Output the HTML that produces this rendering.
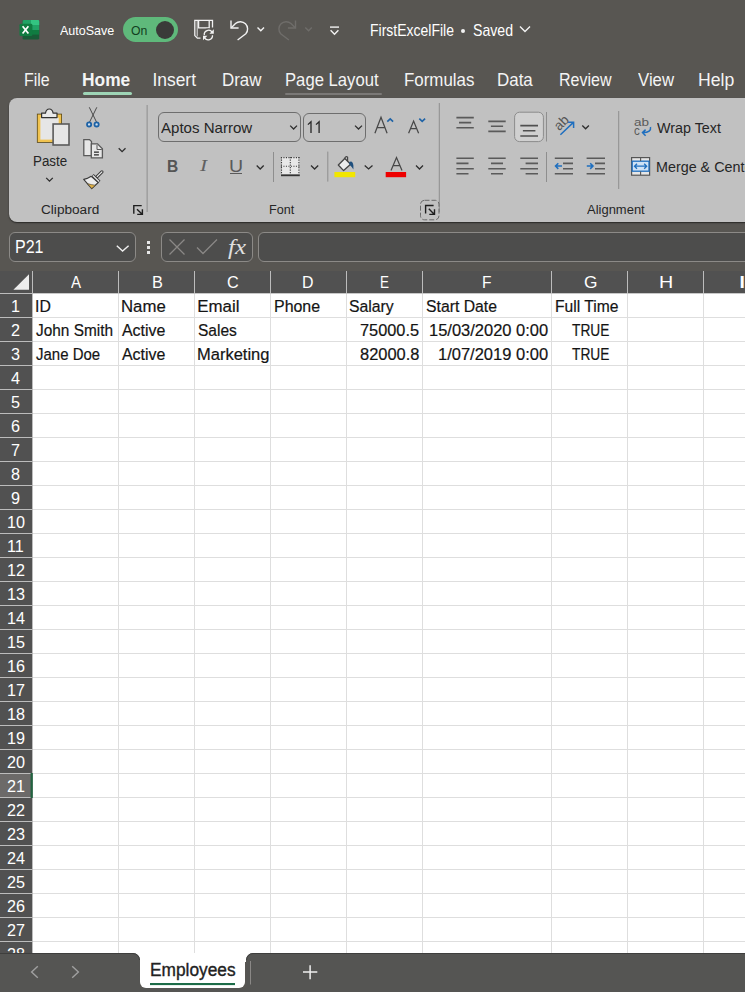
<!DOCTYPE html>
<html><head><meta charset="utf-8"><style>
html,body{margin:0;padding:0;}
body{width:745px;height:992px;overflow:hidden;position:relative;background:#585652;font-family:"Liberation Sans", sans-serif;}
.t{position:absolute;line-height:1;white-space:nowrap;transform-origin:0 0;}
.r{position:absolute;box-sizing:border-box;}
.s{position:absolute;overflow:visible;}
</style></head><body>
<svg class="s" style="left:0px;top:0px" width="60" height="60" viewBox="0 0 60 60">
<rect x="22.6" y="20" width="16.6" height="19.6" rx="1.4" fill="#185c37"/>
<path d="M22.6 21.4 a1.4 1.4 0 0 1 1.4 -1.4 h13.8 a1.4 1.4 0 0 1 1.4 1.4 v3.6 h-16.6z" fill="#21a366"/>
<path d="M31 20 h6.8 a1.4 1.4 0 0 1 1.4 1.4 v3.6 h-8.2z" fill="#33c481"/>
<rect x="22.6" y="25" width="16.6" height="5" fill="#21a366"/>
<rect x="22.6" y="30" width="16.6" height="4.6" fill="#107c41"/>
<rect x="19.5" y="23.8" width="12.9" height="12.3" rx="1.4" fill="#107c41"/>
<path d="M22.6 26.2 L28.4 33.6 M28.4 26.2 L22.6 33.6" stroke="#fff" stroke-width="1.7"/>
</svg>
<div class="t" style="left:59.98px;top:24.00px;font-size:13.44px;color:#fff;font-weight:normal;font-style:normal;font-family:'Liberation Sans', sans-serif;transform:scaleX(0.9319);">AutoSave</div>
<div class="r" style="left:123px;top:17px;width:55px;height:25px;background:#5fb97b;border-radius:13px;"></div>
<div class="r" style="left:156px;top:21.2px;width:18px;height:18px;border-radius:50%;background:#3a3a39"></div>
<div class="t" style="left:131.42px;top:24.00px;font-size:13.08px;color:#123f21;font-weight:normal;font-style:normal;font-family:'Liberation Sans', sans-serif;transform:scaleX(0.9386);">On</div>
<svg class="s" style="left:180px;top:10px" width="170" height="40" viewBox="180 10 170 40">
<g fill="none" stroke="#f2f2f2" stroke-width="1.3">
<path d="M200.5 38.2 H197.4 L194.8 35.6 V20.4 H212.5 V27.5" fill="none" stroke="#f2f2f2" stroke-width="1.3"/>
<path d="M197.2 21 V36.5" fill="none" stroke="#f2f2f2" stroke-width="0.9"/>
<path d="M198.6 20.4 V27.8 H209.2 V20.4" fill="none" stroke="#f2f2f2" stroke-width="1.3"/>
<circle cx="208.4" cy="34.6" r="6.4" fill="#585652" stroke="none"/>
<g fill="none" stroke="#f2f2f2" stroke-width="1.3">
<path d="M204.3 35.2 A4.3 4.3 0 0 1 212.2 32.3"/>
<path d="M212.5 35.2 A4.3 4.3 0 0 1 204.6 37.8"/>
</g>
<path d="M213.8 29.3 V33.8 H209.4 Z" fill="#f2f2f2" stroke="none"/>
<path d="M203 40.2 V35.7 H207.4 Z" fill="#f2f2f2" stroke="none"/>
</g>
<g fill="none" stroke="#f2f2f2" stroke-width="1.4">
<path d="M231 20.6 V28 H238.6"/>
<path d="M231.3 27.7 L235.5 23.5 A7.3 7.3 0 0 1 245.8 33.8 L237.6 40"/>
<path d="M257.5 27.5 L260.8 30.8 L264 27.5"/>
</g>
<g fill="none" stroke="#6f6d6a" stroke-width="1.4">
<path d="M295.5 20.6 V28 H287.9"/>
<path d="M295.2 27.7 L291 23.5 A7.3 7.3 0 0 0 280.7 33.8 L288.9 40"/>
<path d="M305.3 27.5 L308.6 30.8 L311.8 27.5"/>
</g>
<g fill="none" stroke="#f2f2f2" stroke-width="1.4">
<path d="M330 27.1 H339"/>
<path d="M330.6 30.3 L334.5 34.2 L338.4 30.3"/>
</g>
</svg>
<div class="t" style="left:369.65px;top:23.00px;font-size:15.99px;color:#fff;font-weight:normal;font-style:normal;font-family:'Liberation Sans', sans-serif;transform:scaleX(0.8752);">FirstExcelFile</div>
<div class="r" style="left:461.3px;top:28.6px;width:4px;height:4px;border-radius:50%;background:#f2f2f2"></div>
<div class="t" style="left:472.86px;top:23.00px;font-size:15.99px;color:#fff;font-weight:normal;font-style:normal;font-family:'Liberation Sans', sans-serif;transform:scaleX(0.8835);">Saved</div>
<svg class="s" style="left:515px;top:20px" width="20" height="20" viewBox="515 20 20 20"><path d="M520 26.5 L525 31.5 L530 26.5" fill="none" stroke="#f2f2f2" stroke-width="1.4"/></svg>
<div class="t" style="left:24.39px;top:72.00px;font-size:17.44px;color:#f4f4f4;font-weight:normal;font-style:normal;font-family:'Liberation Sans', sans-serif;transform:scaleX(0.9151);">File</div>
<div class="t" style="left:82.34px;top:72.00px;font-size:17.44px;color:#f4f4f4;font-weight:bold;font-style:normal;font-family:'Liberation Sans', sans-serif;transform:scaleX(0.9958);">Home</div>
<div class="r" style="left:83px;top:92px;width:49px;height:3px;background:#9ed5b6;border-radius:2px;"></div>
<div class="t" style="left:152.39px;top:72.00px;font-size:17.44px;color:#f4f4f4;font-weight:normal;font-style:normal;font-family:'Liberation Sans', sans-serif;">Insert</div>
<div class="t" style="left:221.51px;top:72.00px;font-size:17.44px;color:#f4f4f4;font-weight:normal;font-style:normal;font-family:'Liberation Sans', sans-serif;transform:scaleX(0.9692);">Draw</div>
<div class="t" style="left:285.13px;top:72.00px;font-size:17.44px;color:#f4f4f4;font-weight:normal;font-style:normal;font-family:'Liberation Sans', sans-serif;transform:scaleX(0.9555);">Page Layout</div>
<div class="r" style="left:285px;top:93px;width:97px;height:2px;background:#7b7977;border-radius:1px;"></div>
<div class="t" style="left:404.01px;top:72.00px;font-size:17.44px;color:#f4f4f4;font-weight:normal;font-style:normal;font-family:'Liberation Sans', sans-serif;transform:scaleX(0.9685);">Formulas</div>
<div class="t" style="left:497.11px;top:72.00px;font-size:17.44px;color:#f4f4f4;font-weight:normal;font-style:normal;font-family:'Liberation Sans', sans-serif;transform:scaleX(0.9714);">Data</div>
<div class="t" style="left:558.98px;top:72.00px;font-size:17.44px;color:#f4f4f4;font-weight:normal;font-style:normal;font-family:'Liberation Sans', sans-serif;transform:scaleX(0.9193);">Review</div>
<div class="t" style="left:637.53px;top:72.00px;font-size:17.44px;color:#f4f4f4;font-weight:normal;font-style:normal;font-family:'Liberation Sans', sans-serif;transform:scaleX(0.9611);">View</div>
<div class="t" style="left:697.95px;top:72.00px;font-size:17.44px;color:#f4f4f4;font-weight:normal;font-style:normal;font-family:'Liberation Sans', sans-serif;transform:scaleX(1.0116);">Help</div>
<div class="r" style="left:9px;top:97.5px;width:760px;height:124px;background:#c1c1c1;border-radius:8px;box-shadow:0 1px 1.5px rgba(0,0,0,0.55)"></div>
<svg class="s" style="left:20px;top:100px" width="140" height="120" viewBox="20 100 140 120">
<rect x="36.9" y="113.7" width="25.1" height="29.1" fill="#594817"/>
<rect x="37.7" y="114.5" width="23.5" height="27.5" fill="#f1c34f"/>
<rect x="40.4" y="117.6" width="18.3" height="22" fill="#e6e6e6"/>
<path d="M41.6 117.6 V113.1 H45.5 Q46.2 109 49.3 109 Q52.4 109 53.1 113.1 H57 V117.6 Z" fill="#e9e9e9" stroke="#333333" stroke-width="1.2" stroke-linejoin="round"/>
<rect x="53.1" y="124" width="15.9" height="21" fill="#e6e6e6" stroke="#5a5a5a" stroke-width="1.6"/>
<g fill="none" stroke="#4a4a4a" stroke-width="1">
<path d="M89.3 107.3 L96.5 122 M96.8 107.3 L89.6 122"/>
</g>
<g fill="#cfe0f0" stroke="#1d62a6" stroke-width="1.8">
<circle cx="89.1" cy="124.4" r="2.1"/>
<circle cx="96.6" cy="124.4" r="2.1"/>
</g>
<g fill="#e6e6e6" stroke="#5a5a5a" stroke-width="1.3">
<path d="M83.8 139.6 H89.5 L91.5 141.6 V155.6 H83.8 Z"/>
<path d="M91.3 143.9 H97.5 L102.4 148.8 V157.8 H91.3 Z"/>
</g>
<path d="M94 152.2 H98.9 M94 154.8 H98.9" stroke="#262626" stroke-width="1.2"/>
<path d="M97 145 V149.5 H101.8" fill="none" stroke="#5a5a5a" stroke-width="1"/>
<path d="M46.2 177.9 L49.5 181.2 L52.8 177.9" fill="none" stroke="#2e2e2e" stroke-width="1.3"/>
<path d="M118.7 148.2 L122.1 151.6 L125.5 148.2" fill="none" stroke="#2e2e2e" stroke-width="1.3"/>
<path d="M91.2 176.3 Q87.5 178.8 83.7 179.4 L91.7 188.6 L98.3 182.5 Z" fill="#ececec" stroke="#3a3a3a" stroke-width="1.1" stroke-linejoin="round"/>
<path d="M87.3 183.6 Q91.5 184.8 95.6 185.3 L91.7 188.4 Z" fill="#e3b345" stroke="#3a3a3a" stroke-width="0.6"/>
<path d="M101.9 171.9 L97.1 176.7" stroke="#3d3d3d" stroke-width="3.3" stroke-linecap="round"/>
<path d="M101.9 171.9 L97.1 176.7" stroke="#eeeeee" stroke-width="1.2" stroke-linecap="round"/>
<path d="M92.6 175.2 L99.4 181.8" stroke="#3d3d3d" stroke-width="3.2"/>
<path d="M92.9 175.5 L99.1 181.5" stroke="#eeeeee" stroke-width="1.1"/>
<g fill="none" stroke="#1e1e1e" stroke-width="1.4">
<path d="M133.8 213.8 V205.6 H141.7"/>
<path d="M137 209.2 L142.2 214.2 M142.4 209.3 V214.4 H137.2"/>
</g>
<rect x="146.6" y="105" width="1" height="107" fill="#8e8e8e"/>
</svg>
<div class="t" style="left:32.70px;top:154.00px;font-size:14.53px;color:#262626;font-weight:normal;font-style:normal;font-family:'Liberation Sans', sans-serif;transform:scaleX(0.9199);">Paste</div>
<div class="t" style="left:41.11px;top:203.00px;font-size:13.08px;color:#262626;font-weight:normal;font-style:normal;font-family:'Liberation Sans', sans-serif;transform:scaleX(1.0407);">Clipboard</div>
<div class="r" style="left:158px;top:112px;width:142.5px;height:30px;border:1px solid #6e6e6e;border-radius:6px;"></div>
<div class="t" style="left:161.47px;top:120.00px;font-size:15.41px;color:#262626;font-weight:normal;font-style:normal;font-family:'Liberation Sans', sans-serif;transform:scaleX(0.9771);">Aptos Narrow</div>
<div class="r" style="left:303.3px;top:112.5px;width:62.3px;height:29px;border:1px solid #6e6e6e;border-radius:6px;"></div>
<svg class="s" style="left:150px;top:100px" width="300" height="120" viewBox="150 100 300 120">
<g fill="none" stroke="#2e2e2e" stroke-width="1.3">
<path d="M290.2 125.6 L293.6 129 L297 125.6"/>
<path d="M355 125.6 L358.5 129 L362 125.6"/>
<path d="M256.7 165.5 L260.2 169 L263.7 165.5"/>
<path d="M311 165.5 L314.6 169 L318.2 165.5"/>
<path d="M364.7 165.5 L368.6 169 L372.5 165.5"/>
<path d="M416 165.5 L419.5 169 L423 165.5"/>
</g>
<path d="M307.9 124.6 L311 121.7 V133 M316 124.6 L319.1 121.7 V133" fill="none" stroke="#262626" stroke-width="1.3"/>
<g fill="none" stroke="#1f63a6" stroke-width="1.6">
<path d="M387.3 121.6 L390.2 118.8 L393.1 121.6"/>
<path d="M419.3 118.6 L422.2 121.4 L425.1 118.6"/>
</g>
<g fill="none" stroke="#474747" stroke-width="1.25">
<path d="M374.9 133.2 L381 117.3 L387.1 133.2 M377.1 127.7 H384.9"/>
<path d="M408.6 133.2 L413.6 121.1 L418.6 133.2 M410.4 128.6 H416.8"/>
<path d="M391 170.6 L396.5 157.6 L402 170.6 M393 165.6 H400"/>
</g>
<rect x="273" y="152" width="1" height="30" fill="#8e8e8e"/>
<rect x="327.3" y="151.6" width="1" height="30" fill="#8e8e8e"/>
<rect x="281.4" y="157.4" width="18" height="17" fill="#e8e8e8"/>
<g fill="none" stroke="#3c3c3c" stroke-width="1.1" stroke-dasharray="1.1 1.4">
<path d="M280.9 157.6 H300.5 M280.9 166.3 H300.5"/>
<path d="M281.5 157.1 V174.5 M290.3 157.1 V174.5 M298.9 157.1 V174.5"/>
</g>
<rect x="281" y="174.4" width="18.8" height="1.8" fill="#333333"/>
<rect x="334.4" y="172" width="20.8" height="5.2" fill="#f2e600"/>
<rect x="385.7" y="172" width="20.4" height="5.2" fill="#ee0000"/>
<path d="M338.3 165 L344.8 158.5 L350.6 164.3 L343.6 170.6 Z" fill="#ececec" stroke="#454545" stroke-width="1.3" stroke-linejoin="round"/>
<path d="M344.3 159 Q345.8 155.3 347.6 157.2 L347.6 161.2" fill="none" stroke="#454545" stroke-width="1.2"/>
<path d="M349.2 162 Q352.6 159.8 353.4 165.5 L353.4 169.4 Q351.5 166.5 349.4 164.5 Z" fill="#1f4f7d"/>
<rect x="438.8" y="103" width="1" height="109" fill="#8e8e8e"/>
<rect x="420.5" y="200.3" width="18.5" height="19.5" rx="4" fill="none" stroke="#6a6a6a" stroke-width="1" stroke-dasharray="5 2"/>
<g fill="none" stroke="#1e1e1e" stroke-width="1.4">
<path d="M425.6 213.6 V205.5 H433.6"/>
<path d="M428.8 208.8 L434.2 214.2 M434.5 209.3 V214.4 H429.3"/>
</g>
</svg>
<div class="t" style="left:167.46px;top:158.00px;font-size:16.13px;color:#555555;font-weight:bold;font-style:normal;font-family:'Liberation Sans', sans-serif;transform:scaleX(0.9655);">B</div>
<div class="t" style="left:200.08px;top:158.00px;font-size:16.13px;color:#606060;font-weight:normal;font-style:italic;font-family:'Liberation Serif', serif;transform:scaleX(1.3188);">I</div>
<div class="t" style="left:228.99px;top:158.00px;font-size:16.13px;color:#5a5a5a;font-weight:normal;font-style:normal;font-family:'Liberation Sans', sans-serif;transform:scaleX(1.2115);">U</div>
<div class="r" style="left:230.3px;top:173px;width:11.5px;height:1.4px;background:#5a5a5a;"></div>
<div class="t" style="left:269.37px;top:203.00px;font-size:13.08px;color:#262626;font-weight:normal;font-style:normal;font-family:'Liberation Sans', sans-serif;transform:scaleX(0.9637);">Font</div>
<svg class="s" style="left:440px;top:100px" width="305" height="120" viewBox="440 100 305 120">
<g stroke="#5a5a5a" stroke-width="1.6">
<path d="M456.4 117.6 H473.8 M459 122.6 H471.2 M456.4 127.8 H473.8"/>
<path d="M488.3 121.4 H505.7 M490.9 126.2 H503.1 M488.3 131.4 H505.7"/>
<path d="M520.3 125.6 H538 M522.9 130.8 H535.4 M520.3 136 H538"/>
<path d="M456.4 158.2 H473.8 M456.4 163.4 H468.5 M456.4 168.8 H473.8 M456.4 173.8 H468.5"/>
<path d="M488.3 158.2 H505.7 M491 163.4 H503 M488.3 168.8 H505.7 M491 173.8 H503"/>
<path d="M520.3 158.2 H538 M525.6 163.4 H538 M520.3 168.8 H538 M525.6 173.8 H538"/>
<path d="M554.8 158.2 H573 M563 163.4 H573 M563 168.8 H573 M554.8 173.8 H573"/>
<path d="M586.6 158.2 H605 M595 163.4 H605 M595 168.8 H605 M586.6 173.8 H605"/>
</g>
<g fill="none" stroke="#1f6fbf" stroke-width="1.5">
<path d="M555.5 166.1 H562 M558.3 163.3 L555.5 166.1 L558.3 168.9"/>
<path d="M586.8 166.1 H593 M590.2 163.3 L593 166.1 L590.2 168.9"/>
<path d="M560.4 134.7 L573.4 122.4 M567.8 122.3 H573.6 V128"/>
</g>
<rect x="514.6" y="112.2" width="28.8" height="29.4" rx="5" fill="#d0d0d0" stroke="#8c8c8c" stroke-width="1"/>
<path d="M520.3 125.6 H538 M522.9 130.8 H535.4 M520.3 136 H538" stroke="#505050" stroke-width="1.6"/>
<rect x="546" y="112" width="1" height="29.5" fill="#8e8e8e"/>
<rect x="546" y="152" width="1" height="30" fill="#8e8e8e"/>
<path d="M582.3 125.5 L585.6 128.8 L588.9 125.5" fill="none" stroke="#2e2e2e" stroke-width="1.3"/>
<rect x="618.2" y="111" width="1" height="78" fill="#8e8e8e"/>
<path d="M650.5 127 Q651.5 132.3 643 132.6 M645.6 129.6 L642.5 132.6 L645.6 135.8" fill="none" stroke="#1f6fbf" stroke-width="1.5"/>
<rect x="631.6" y="157.6" width="18" height="17.6" fill="#e6e6e6" stroke="#555" stroke-width="1.2"/>
<rect x="632.2" y="161.2" width="16.8" height="10" fill="#cfe2f5" stroke="#1f6fbf" stroke-width="1.3"/>
<path d="M640.6 157.6 V161 M640.6 171.4 V175" stroke="#555" stroke-width="1.1"/>
<path d="M634.5 166.2 H646.7 M637 163.7 L634.5 166.2 L637 168.7 M644.2 163.7 L646.7 166.2 L644.2 168.7" fill="none" stroke="#1f6fbf" stroke-width="1.3"/>
</svg>
<div class="t" style="left:551.5px;top:116px;width:20px;height:15px;text-align:center;font-size:13.5px;color:#555;transform:rotate(-45deg);transform-origin:50% 50%;">ab</div>
<div class="t" style="left:633.63px;top:118.00px;font-size:10.17px;color:#5a5a5a;font-weight:normal;font-style:normal;font-family:'Liberation Sans', sans-serif;transform:scaleX(1.3292);">ab</div>
<div class="t" style="left:633.71px;top:125.00px;font-size:12.45px;color:#5a5a5a;font-weight:normal;font-style:normal;font-family:'Liberation Sans', sans-serif;transform:scaleX(0.9313);">c</div>
<div class="t" style="left:656.64px;top:121.00px;font-size:14.53px;color:#262626;font-weight:normal;font-style:normal;font-family:'Liberation Sans', sans-serif;transform:scaleX(0.9871);">Wrap Text</div>
<div class="t" style="left:655.52px;top:160.00px;font-size:14.53px;color:#262626;font-weight:normal;font-style:normal;font-family:'Liberation Sans', sans-serif;transform:scaleX(0.9871);">Merge &amp; Center</div>
<div class="t" style="left:587.37px;top:203.00px;font-size:13.08px;color:#262626;font-weight:normal;font-style:normal;font-family:'Liberation Sans', sans-serif;transform:scaleX(0.9923);">Alignment</div>
<div class="r" style="left:9px;top:232px;width:127px;height:30px;border:1px solid #8c8a87;border-radius:6px;background:#4d4d4c"></div>
<div class="t" style="left:15.29px;top:239.00px;font-size:17.73px;color:#fff;font-weight:normal;font-style:normal;font-family:'Liberation Sans', sans-serif;transform:scaleX(0.9032);">P21</div>
<svg class="s" style="left:110px;top:240px" width="25" height="15" viewBox="110 240 25 15"><path d="M116.8 245.8 L122.6 251 L128.6 245.8" fill="none" stroke="#f0f0f0" stroke-width="1.4"/></svg>
<div class="r" style="left:147.2px;top:240.8px;width:3px;height:3px;background:#e6e6e6"></div>
<div class="r" style="left:147.2px;top:245.8px;width:3px;height:3px;background:#e6e6e6"></div>
<div class="r" style="left:147.2px;top:250.8px;width:3px;height:3px;background:#e6e6e6"></div>
<div class="r" style="left:161px;top:232px;width:92px;height:30px;border:1px solid #8c8a87;border-radius:6px;background:#4d4d4c"></div>
<svg class="s" style="left:160px;top:232px" width="95" height="30" viewBox="160 232 95 30"><g fill="none" stroke="#8a8886" stroke-width="1.3">
<path d="M169.5 239.5 L184.5 254.5 M184.5 239.5 L169.5 254.5"/>
<path d="M197 247.5 L203 253.5 L217 239.5"/>
</g></svg>
<div class="t" style="left:228.22px;top:237.00px;font-size:20.35px;color:#e0e0e0;font-weight:normal;font-style:italic;font-family:'Liberation Serif', serif;transform:scaleX(1.2231);">fx</div>
<div class="r" style="left:258px;top:232px;width:500px;height:30px;border:1px solid #8c8a87;border-radius:6px;background:#4d4d4c"></div>
<div class="r" style="left:0px;top:271px;width:745px;height:22px;background:#515151;"></div>
<div class="r" style="left:0px;top:293px;width:32px;height:660px;background:#515151;"></div>
<div class="r" style="left:33px;top:294px;width:712px;height:659px;background:#ffffff;"></div>
<svg class="s" style="left:0px;top:265px" width="745" height="700" viewBox="0 265 745 700"><path d="M13.4 289.7 H29 V274.2 Z" fill="#ededed"/><rect x="32" y="271" width="1" height="682" fill="#bcbcbc"/><rect x="118" y="271" width="1" height="22" fill="#bcbcbc"/><rect x="118" y="294" width="1" height="659" fill="#dedede"/><rect x="194" y="271" width="1" height="22" fill="#bcbcbc"/><rect x="194" y="294" width="1" height="659" fill="#dedede"/><rect x="270" y="271" width="1" height="22" fill="#bcbcbc"/><rect x="270" y="294" width="1" height="659" fill="#dedede"/><rect x="346" y="271" width="1" height="22" fill="#bcbcbc"/><rect x="346" y="294" width="1" height="659" fill="#dedede"/><rect x="422" y="271" width="1" height="22" fill="#bcbcbc"/><rect x="422" y="294" width="1" height="659" fill="#dedede"/><rect x="551" y="271" width="1" height="22" fill="#bcbcbc"/><rect x="551" y="294" width="1" height="659" fill="#dedede"/><rect x="627" y="271" width="1" height="22" fill="#bcbcbc"/><rect x="627" y="294" width="1" height="659" fill="#dedede"/><rect x="703" y="271" width="1" height="22" fill="#bcbcbc"/><rect x="703" y="294" width="1" height="659" fill="#dedede"/><rect x="0" y="293" width="33" height="1" fill="#bcbcbc"/><rect x="33" y="293" width="712" height="1" fill="#c8c8c8"/><rect x="0" y="317" width="32" height="1" fill="#bcbcbc"/><rect x="33" y="317" width="712" height="1" fill="#dedede"/><rect x="0" y="341" width="32" height="1" fill="#bcbcbc"/><rect x="33" y="341" width="712" height="1" fill="#dedede"/><rect x="0" y="365" width="32" height="1" fill="#bcbcbc"/><rect x="33" y="365" width="712" height="1" fill="#dedede"/><rect x="0" y="389" width="32" height="1" fill="#bcbcbc"/><rect x="33" y="389" width="712" height="1" fill="#dedede"/><rect x="0" y="413" width="32" height="1" fill="#bcbcbc"/><rect x="33" y="413" width="712" height="1" fill="#dedede"/><rect x="0" y="437" width="32" height="1" fill="#bcbcbc"/><rect x="33" y="437" width="712" height="1" fill="#dedede"/><rect x="0" y="461" width="32" height="1" fill="#bcbcbc"/><rect x="33" y="461" width="712" height="1" fill="#dedede"/><rect x="0" y="485" width="32" height="1" fill="#bcbcbc"/><rect x="33" y="485" width="712" height="1" fill="#dedede"/><rect x="0" y="509" width="32" height="1" fill="#bcbcbc"/><rect x="33" y="509" width="712" height="1" fill="#dedede"/><rect x="0" y="533" width="32" height="1" fill="#bcbcbc"/><rect x="33" y="533" width="712" height="1" fill="#dedede"/><rect x="0" y="557" width="32" height="1" fill="#bcbcbc"/><rect x="33" y="557" width="712" height="1" fill="#dedede"/><rect x="0" y="581" width="32" height="1" fill="#bcbcbc"/><rect x="33" y="581" width="712" height="1" fill="#dedede"/><rect x="0" y="605" width="32" height="1" fill="#bcbcbc"/><rect x="33" y="605" width="712" height="1" fill="#dedede"/><rect x="0" y="629" width="32" height="1" fill="#bcbcbc"/><rect x="33" y="629" width="712" height="1" fill="#dedede"/><rect x="0" y="653" width="32" height="1" fill="#bcbcbc"/><rect x="33" y="653" width="712" height="1" fill="#dedede"/><rect x="0" y="677" width="32" height="1" fill="#bcbcbc"/><rect x="33" y="677" width="712" height="1" fill="#dedede"/><rect x="0" y="701" width="32" height="1" fill="#bcbcbc"/><rect x="33" y="701" width="712" height="1" fill="#dedede"/><rect x="0" y="725" width="32" height="1" fill="#bcbcbc"/><rect x="33" y="725" width="712" height="1" fill="#dedede"/><rect x="0" y="749" width="32" height="1" fill="#bcbcbc"/><rect x="33" y="749" width="712" height="1" fill="#dedede"/><rect x="0" y="773" width="32" height="1" fill="#bcbcbc"/><rect x="33" y="773" width="712" height="1" fill="#dedede"/><rect x="0" y="797" width="32" height="1" fill="#bcbcbc"/><rect x="33" y="797" width="712" height="1" fill="#dedede"/><rect x="0" y="821" width="32" height="1" fill="#bcbcbc"/><rect x="33" y="821" width="712" height="1" fill="#dedede"/><rect x="0" y="845" width="32" height="1" fill="#bcbcbc"/><rect x="33" y="845" width="712" height="1" fill="#dedede"/><rect x="0" y="869" width="32" height="1" fill="#bcbcbc"/><rect x="33" y="869" width="712" height="1" fill="#dedede"/><rect x="0" y="893" width="32" height="1" fill="#bcbcbc"/><rect x="33" y="893" width="712" height="1" fill="#dedede"/><rect x="0" y="917" width="32" height="1" fill="#bcbcbc"/><rect x="33" y="917" width="712" height="1" fill="#dedede"/><rect x="0" y="941" width="32" height="1" fill="#bcbcbc"/><rect x="33" y="941" width="712" height="1" fill="#dedede"/><rect x="0" y="774" width="32" height="23" fill="#6c6a69"/><rect x="30.6" y="773" width="2.2" height="25" fill="#226340"/></svg>
<div class="t" style="left:70.97px;top:274.00px;font-size:17.01px;color:#ffffff;font-weight:normal;font-style:normal;font-family:'Liberation Sans', sans-serif;transform:scaleX(0.8868);">A</div>
<div class="t" style="left:151.76px;top:274.00px;font-size:17.01px;color:#ffffff;font-weight:normal;font-style:normal;font-family:'Liberation Sans', sans-serif;transform:scaleX(0.9612);">B</div>
<div class="t" style="left:226.57px;top:274.00px;font-size:17.01px;color:#ffffff;font-weight:normal;font-style:normal;font-family:'Liberation Sans', sans-serif;transform:scaleX(0.9564);">C</div>
<div class="t" style="left:302.40px;top:274.00px;font-size:17.01px;color:#ffffff;font-weight:normal;font-style:normal;font-family:'Liberation Sans', sans-serif;transform:scaleX(0.9333);">D</div>
<div class="t" style="left:379.90px;top:274.00px;font-size:17.01px;color:#ffffff;font-weight:normal;font-style:normal;font-family:'Liberation Sans', sans-serif;transform:scaleX(0.7920);">E</div>
<div class="t" style="left:482.42px;top:274.00px;font-size:17.01px;color:#ffffff;font-weight:normal;font-style:normal;font-family:'Liberation Sans', sans-serif;transform:scaleX(0.9143);">F</div>
<div class="t" style="left:583.63px;top:274.00px;font-size:17.01px;color:#ffffff;font-weight:normal;font-style:normal;font-family:'Liberation Sans', sans-serif;transform:scaleX(1.0178);">G</div>
<div class="t" style="left:658.88px;top:274.00px;font-size:17.01px;color:#ffffff;font-weight:normal;font-style:normal;font-family:'Liberation Sans', sans-serif;transform:scaleX(1.1580);">H</div>
<div class="t" style="left:737.83px;top:274.00px;font-size:17.01px;color:#ffffff;font-weight:normal;font-style:normal;font-family:'Liberation Sans', sans-serif;transform:scaleX(1.7655);">I</div>
<div class="t" style="left:11.17px;top:299.00px;font-size:16.72px;color:#ffffff;font-weight:normal;font-style:normal;font-family:'Liberation Sans', sans-serif;transform:scaleX(0.9700);">1</div>
<div class="t" style="left:11.39px;top:323.00px;font-size:16.72px;color:#ffffff;font-weight:normal;font-style:normal;font-family:'Liberation Sans', sans-serif;transform:scaleX(0.9700);">2</div>
<div class="t" style="left:11.44px;top:347.00px;font-size:16.72px;color:#ffffff;font-weight:normal;font-style:normal;font-family:'Liberation Sans', sans-serif;transform:scaleX(0.9700);">3</div>
<div class="t" style="left:11.44px;top:371.00px;font-size:16.72px;color:#ffffff;font-weight:normal;font-style:normal;font-family:'Liberation Sans', sans-serif;transform:scaleX(0.9700);">4</div>
<div class="t" style="left:11.41px;top:395.00px;font-size:16.72px;color:#ffffff;font-weight:normal;font-style:normal;font-family:'Liberation Sans', sans-serif;transform:scaleX(0.9700);">5</div>
<div class="t" style="left:11.34px;top:419.00px;font-size:16.72px;color:#ffffff;font-weight:normal;font-style:normal;font-family:'Liberation Sans', sans-serif;transform:scaleX(0.9700);">6</div>
<div class="t" style="left:11.38px;top:443.00px;font-size:16.72px;color:#ffffff;font-weight:normal;font-style:normal;font-family:'Liberation Sans', sans-serif;transform:scaleX(0.9700);">7</div>
<div class="t" style="left:11.39px;top:467.00px;font-size:16.72px;color:#ffffff;font-weight:normal;font-style:normal;font-family:'Liberation Sans', sans-serif;transform:scaleX(0.9700);">8</div>
<div class="t" style="left:11.40px;top:491.00px;font-size:16.72px;color:#ffffff;font-weight:normal;font-style:normal;font-family:'Liberation Sans', sans-serif;transform:scaleX(0.9700);">9</div>
<div class="t" style="left:6.58px;top:515.00px;font-size:16.72px;color:#ffffff;font-weight:normal;font-style:normal;font-family:'Liberation Sans', sans-serif;transform:scaleX(0.9700);">10</div>
<div class="t" style="left:6.66px;top:539.00px;font-size:16.72px;color:#ffffff;font-weight:normal;font-style:normal;font-family:'Liberation Sans', sans-serif;transform:scaleX(0.9700);">11</div>
<div class="t" style="left:6.67px;top:563.00px;font-size:16.72px;color:#ffffff;font-weight:normal;font-style:normal;font-family:'Liberation Sans', sans-serif;transform:scaleX(0.9700);">12</div>
<div class="t" style="left:6.62px;top:587.00px;font-size:16.72px;color:#ffffff;font-weight:normal;font-style:normal;font-family:'Liberation Sans', sans-serif;transform:scaleX(0.9700);">13</div>
<div class="t" style="left:6.50px;top:611.00px;font-size:16.72px;color:#ffffff;font-weight:normal;font-style:normal;font-family:'Liberation Sans', sans-serif;transform:scaleX(0.9700);">14</div>
<div class="t" style="left:6.61px;top:635.00px;font-size:16.72px;color:#ffffff;font-weight:normal;font-style:normal;font-family:'Liberation Sans', sans-serif;transform:scaleX(0.9700);">15</div>
<div class="t" style="left:6.62px;top:659.00px;font-size:16.72px;color:#ffffff;font-weight:normal;font-style:normal;font-family:'Liberation Sans', sans-serif;transform:scaleX(0.9700);">16</div>
<div class="t" style="left:6.67px;top:683.00px;font-size:16.72px;color:#ffffff;font-weight:normal;font-style:normal;font-family:'Liberation Sans', sans-serif;transform:scaleX(0.9700);">17</div>
<div class="t" style="left:6.62px;top:707.00px;font-size:16.72px;color:#ffffff;font-weight:normal;font-style:normal;font-family:'Liberation Sans', sans-serif;transform:scaleX(0.9700);">18</div>
<div class="t" style="left:6.65px;top:731.00px;font-size:16.72px;color:#ffffff;font-weight:normal;font-style:normal;font-family:'Liberation Sans', sans-serif;transform:scaleX(0.9700);">19</div>
<div class="t" style="left:6.79px;top:755.00px;font-size:16.72px;color:#ffffff;font-weight:normal;font-style:normal;font-family:'Liberation Sans', sans-serif;transform:scaleX(0.9700);">20</div>
<div class="t" style="left:6.87px;top:779.00px;font-size:16.72px;color:#ffffff;font-weight:normal;font-style:normal;font-family:'Liberation Sans', sans-serif;transform:scaleX(0.9700);">21</div>
<div class="t" style="left:6.88px;top:803.00px;font-size:16.72px;color:#ffffff;font-weight:normal;font-style:normal;font-family:'Liberation Sans', sans-serif;transform:scaleX(0.9700);">22</div>
<div class="t" style="left:6.83px;top:827.00px;font-size:16.72px;color:#ffffff;font-weight:normal;font-style:normal;font-family:'Liberation Sans', sans-serif;transform:scaleX(0.9700);">23</div>
<div class="t" style="left:6.71px;top:851.00px;font-size:16.72px;color:#ffffff;font-weight:normal;font-style:normal;font-family:'Liberation Sans', sans-serif;transform:scaleX(0.9700);">24</div>
<div class="t" style="left:6.82px;top:875.00px;font-size:16.72px;color:#ffffff;font-weight:normal;font-style:normal;font-family:'Liberation Sans', sans-serif;transform:scaleX(0.9700);">25</div>
<div class="t" style="left:6.83px;top:899.00px;font-size:16.72px;color:#ffffff;font-weight:normal;font-style:normal;font-family:'Liberation Sans', sans-serif;transform:scaleX(0.9700);">26</div>
<div class="t" style="left:6.88px;top:923.00px;font-size:16.72px;color:#ffffff;font-weight:normal;font-style:normal;font-family:'Liberation Sans', sans-serif;transform:scaleX(0.9700);">27</div>
<div class="t" style="left:6.83px;top:947.00px;font-size:16.72px;color:#ffffff;font-weight:normal;font-style:normal;font-family:'Liberation Sans', sans-serif;transform:scaleX(0.9700);">28</div>
<div class="t" style="left:34.94px;top:299.00px;font-size:16.86px;color:#141414;font-weight:normal;font-style:normal;font-family:'Liberation Sans', sans-serif;transform:scaleX(0.9381);-webkit-text-stroke:0.2px #141414;">ID</div>
<div class="t" style="left:121.02px;top:299.00px;font-size:16.86px;color:#141414;font-weight:normal;font-style:normal;font-family:'Liberation Sans', sans-serif;transform:scaleX(0.9943);-webkit-text-stroke:0.2px #141414;">Name</div>
<div class="t" style="left:197.32px;top:299.00px;font-size:16.86px;color:#141414;font-weight:normal;font-style:normal;font-family:'Liberation Sans', sans-serif;-webkit-text-stroke:0.2px #141414;">Email</div>
<div class="t" style="left:273.59px;top:299.00px;font-size:16.86px;color:#141414;font-weight:normal;font-style:normal;font-family:'Liberation Sans', sans-serif;transform:scaleX(0.9459);-webkit-text-stroke:0.2px #141414;">Phone</div>
<div class="t" style="left:349.28px;top:299.00px;font-size:16.86px;color:#141414;font-weight:normal;font-style:normal;font-family:'Liberation Sans', sans-serif;transform:scaleX(0.9363);-webkit-text-stroke:0.2px #141414;">Salary</div>
<div class="t" style="left:425.78px;top:299.00px;font-size:16.86px;color:#141414;font-weight:normal;font-style:normal;font-family:'Liberation Sans', sans-serif;transform:scaleX(0.9343);-webkit-text-stroke:0.2px #141414;">Start Date</div>
<div class="t" style="left:554.62px;top:299.00px;font-size:16.86px;color:#141414;font-weight:normal;font-style:normal;font-family:'Liberation Sans', sans-serif;transform:scaleX(0.9273);-webkit-text-stroke:0.2px #141414;">Full Time</div>
<div class="t" style="left:36.16px;top:323.00px;font-size:16.86px;color:#141414;font-weight:normal;font-style:normal;font-family:'Liberation Sans', sans-serif;transform:scaleX(0.9134);-webkit-text-stroke:0.2px #141414;">John Smith</div>
<div class="t" style="left:122.37px;top:323.00px;font-size:16.86px;color:#141414;font-weight:normal;font-style:normal;font-family:'Liberation Sans', sans-serif;transform:scaleX(0.9439);-webkit-text-stroke:0.2px #141414;">Active</div>
<div class="t" style="left:197.99px;top:323.00px;font-size:16.86px;color:#141414;font-weight:normal;font-style:normal;font-family:'Liberation Sans', sans-serif;transform:scaleX(0.9215);-webkit-text-stroke:0.2px #141414;">Sales</div>
<div class="t" style="left:360.16px;top:323.00px;font-size:16.86px;color:#141414;font-weight:normal;font-style:normal;font-family:'Liberation Sans', sans-serif;transform:scaleX(0.9684);-webkit-text-stroke:0.2px #141414;">75000.5</div>
<div class="t" style="left:428.64px;top:323.00px;font-size:16.86px;color:#141414;font-weight:normal;font-style:normal;font-family:'Liberation Sans', sans-serif;transform:scaleX(0.9780);-webkit-text-stroke:0.2px #141414;">15/03/2020 0:00</div>
<div class="t" style="left:571.59px;top:323.00px;font-size:16.86px;color:#141414;font-weight:normal;font-style:normal;font-family:'Liberation Sans', sans-serif;transform:scaleX(0.8148);-webkit-text-stroke:0.2px #141414;">TRUE</div>
<div class="t" style="left:36.17px;top:347.00px;font-size:16.86px;color:#141414;font-weight:normal;font-style:normal;font-family:'Liberation Sans', sans-serif;transform:scaleX(0.8881);-webkit-text-stroke:0.2px #141414;">Jane Doe</div>
<div class="t" style="left:122.37px;top:347.00px;font-size:16.86px;color:#141414;font-weight:normal;font-style:normal;font-family:'Liberation Sans', sans-serif;transform:scaleX(0.9439);-webkit-text-stroke:0.2px #141414;">Active</div>
<div class="t" style="left:197.35px;top:347.00px;font-size:16.86px;color:#141414;font-weight:normal;font-style:normal;font-family:'Liberation Sans', sans-serif;transform:scaleX(0.9782);-webkit-text-stroke:0.2px #141414;">Marketing</div>
<div class="t" style="left:359.79px;top:347.00px;font-size:16.86px;color:#141414;font-weight:normal;font-style:normal;font-family:'Liberation Sans', sans-serif;transform:scaleX(0.9751);-webkit-text-stroke:0.2px #141414;">82000.8</div>
<div class="t" style="left:437.74px;top:347.00px;font-size:16.86px;color:#141414;font-weight:normal;font-style:normal;font-family:'Liberation Sans', sans-serif;transform:scaleX(0.9786);-webkit-text-stroke:0.2px #141414;">1/07/2019 0:00</div>
<div class="t" style="left:571.59px;top:347.00px;font-size:16.86px;color:#141414;font-weight:normal;font-style:normal;font-family:'Liberation Sans', sans-serif;transform:scaleX(0.8148);-webkit-text-stroke:0.2px #141414;">TRUE</div>
<svg class="s" style="left:0px;top:940px" width="745" height="52" viewBox="0 940 745 52">
<rect x="120" y="953" width="150" height="9" fill="#ffffff"/>
<path d="M0 953 H133 A7 7 0 0 1 140 960 V992 H0 Z" fill="#555553"/>
<path d="M246 960 A7 7 0 0 1 253 953 H745 V992 H246 Z" fill="#555553"/>
<path d="M0 953.5 H133 A6.5 6.5 0 0 1 139.5 960" fill="none" stroke="#3e3e3d" stroke-width="1"/>
<path d="M246.5 960 A6.5 6.5 0 0 1 253 953.5 H745" fill="none" stroke="#3e3e3d" stroke-width="1"/>
<path d="M140 953 V982 A6 6 0 0 0 146 988 H239 A6 6 0 0 0 245 982 V953 Z" fill="#ffffff"/>
<rect x="140" y="988" width="106" height="4" fill="#555553"/>
<rect x="150" y="983" width="85" height="2.1" fill="#1c6c48"/>
<rect x="250" y="961" width="1" height="23.5" fill="#8a8886"/>
<g fill="none" stroke="#a0a0a0" stroke-width="1.4">
<path d="M37.8 966.2 L31.6 972 L37.8 977.8"/>
<path d="M72.2 966.2 L78.4 972 L72.2 977.8"/>
</g>
<path d="M303 971.9 H317.3 M310.1 965.2 V979.2" stroke="#efefef" stroke-width="1.5"/>
</svg>
<div class="t" style="left:149.58px;top:961.00px;font-size:18.02px;color:#222222;font-weight:normal;font-style:normal;font-family:'Liberation Sans', sans-serif;transform:scaleX(0.9606);-webkit-text-stroke:0.35px #222222;">Employees</div>
</body></html>
